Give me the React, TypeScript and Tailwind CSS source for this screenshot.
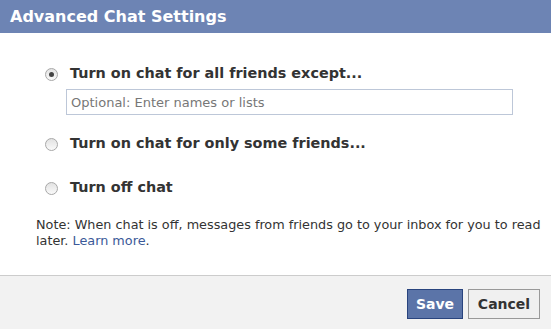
import React from 'react';

const Radio: React.FC<{ checked?: boolean }> = ({ checked }) => (
  <span className="w-[13px] h-[13px] rounded-full border border-[#a8a8a8] bg-gradient-to-b from-[#e2e2e2] to-[#fafafa] flex items-center justify-center shrink-0">
    {checked && <span className="w-[5px] h-[5px] rounded-full bg-[#444]" />}
  </span>
);

const Option: React.FC<{ label: string; checked?: boolean }> = ({ label, checked }) => (
  <label className="flex items-center gap-[12px] h-[20px]">
    <Radio checked={checked} />
    <span className="text-[14.4px] font-bold text-[#333] font-['DejaVu_Sans',sans-serif]">{label}</span>
  </label>
);

export default function App() {
  return (
    <div className="w-[551px] h-[329px] bg-white flex flex-col font-['DejaVu_Sans',Verdana,sans-serif]">
      <header className="h-[33px] bg-[#6d84b4] flex items-center px-[10px]">
        <h1 className="text-white text-[16px] font-bold">Advanced Chat Settings</h1>
      </header>
      <div className="flex-1 flex flex-col pt-[31px] pl-[36px] pr-[2px]">
        <div className="pl-[9px]">
          <Option label="Turn on chat for all friends except..." checked />
          <input
            placeholder="Optional: Enter names or lists"
            className="mt-[5px] ml-[21px] w-[447px] h-[26px] border border-[#bdc7d8] px-[4px] text-[13px] placeholder:text-[#777] outline-none"
          />
          <div className="mt-[19px]">
            <Option label="Turn on chat for only some friends..." />
          </div>
          <div className="mt-[24px]">
            <Option label="Turn off chat" />
          </div>
        </div>
        <p className="mt-[19px] text-[12.8px] leading-[16px] text-[#333]">
          Note: When chat is off, messages from friends go to your inbox for you to read later.{' '}
          <a className="text-[#3b5998]">Learn more</a>.
        </p>
      </div>
      <footer className="h-[54px] border-t border-[#ccc] bg-[#f2f2f2] flex items-start justify-end gap-[5px] pt-[13px] pr-[11px]">
        <button className="w-[56px] h-[30px] bg-[#5b74a8] border border-[#29447e] text-white text-[14px] font-bold">
          Save
        </button>
        <button className="w-[72px] h-[30px] bg-[#f0f0f0] border border-[#999] text-[#333] text-[14px] font-bold">
          Cancel
        </button>
      </footer>
    </div>
  );
}
